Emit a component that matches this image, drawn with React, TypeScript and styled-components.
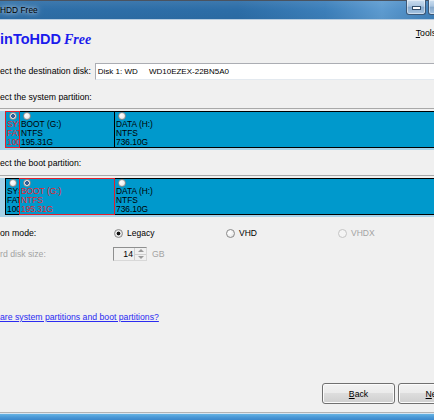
import styled, { createGlobalStyle } from "styled-components";

const GlobalStyle = createGlobalStyle`
  html, body {
    margin: 0;
    padding: 0;
  }
  body {
    width: 434px;
    height: 420px;
    overflow: hidden;
    background: #f0f0f0;
    font-family: "Liberation Sans", Arial, sans-serif;
    font-size: 8.7px;
    color: #000;
  }
`;

type Part = { name: string; fs: string; size: string; width?: number };

const parts: Part[] = [
  { name: "SYS", fs: "FAT", size: "100", width: 15 },
  { name: "BOOT (G:)", fs: "NTFS", size: "195.31G", width: 96 },
  { name: "DATA (H:)", fs: "NTFS", size: "736.10G" },
];

const App = () => {
  return (
    <Window>
      <GlobalStyle />
      <TitleBar>
        <Title>HDD Free</Title>
        <CaptionButtons>
          <CaptionButton>
            <MinGlyph />
          </CaptionButton>
          <CaptionButton />
        </CaptionButtons>
      </TitleBar>

      <HeaderRow>
        <Logo>
          inToHDD<Edition>Free</Edition>
        </Logo>
        <Menu>
          <u>T</u>ools
        </Menu>
      </HeaderRow>

      <DiskRow>
        <span>ect the destination disk:</span>
        <DiskField>{"Disk 1: WD     WD10EZEX-22BN5A0"}</DiskField>
      </DiskRow>

      <SectionLabel>ect the system partition:</SectionLabel>
      <PartitionStrip parts={parts} selected={0} />

      <SectionLabel $gap={7}>ect the boot partition:</SectionLabel>
      <PartitionStrip parts={parts} selected={1} $gap={6} />

      <OptionRow $gap={10}>
        <span>on mode:</span>
        <RadioOption>
          <Radio $size={9} $checked $dot="#111" />
          Legacy
        </RadioOption>
        <RadioOption>
          <Radio $size={9} />
          VHD
        </RadioOption>
        <RadioOption $disabled>
          <Radio $size={9} $disabled />
          VHDX
        </RadioOption>
      </OptionRow>

      <OptionRow $gap={8}>
        <Muted>rd disk size:</Muted>
        <SizeCell>
          <SpinBox>
            <SpinValue>14</SpinValue>
            <SpinArrows>
              <SpinHalf>
                <Arrow $up />
              </SpinHalf>
              <SpinHalf>
                <Arrow />
              </SpinHalf>
            </SpinArrows>
          </SpinBox>
          <Muted>GB</Muted>
        </SizeCell>
      </OptionRow>

      <HelpLink href="#">are system partitions and boot partitions?</HelpLink>

      <Spacer />

      <ButtonRow>
        <Button>
          <u>B</u>ack
        </Button>
        <Button>
          <u>N</u>ext
        </Button>
      </ButtonRow>
      <BottomFrame />
    </Window>
  );
};

const PartitionStrip = ({
  parts,
  selected,
  $gap,
}: {
  parts: Part[];
  selected: number;
  $gap?: number;
}) => (
  <Strip $gap={$gap}>
    <Track>
      {parts.map((p, i) => (
        <Segment key={p.name} $selected={i === selected} $width={p.width}>
          <Radio $size={8} $checked={i === selected} $dot="#2f5f9a" />
          <SegLine $selected={i === selected}>{p.name}</SegLine>
          <SegLine $selected={i === selected}>{p.fs}</SegLine>
          <SegLine $selected={i === selected}>{p.size}</SegLine>
        </Segment>
      ))}
    </Track>
  </Strip>
);

export default App;

const Window = styled.div`
  width: 434px;
  height: 420px;
  display: flex;
  flex-direction: column;
  overflow: hidden;
`;

const TitleBar = styled.div`
  height: 20px;
  box-sizing: border-box;
  border-top: 1px solid #4a5360;
  border-bottom: 1px solid #b9cde0;
  background: linear-gradient(
      180deg,
      rgba(255, 255, 255, 0.08) 0%,
      rgba(255, 255, 255, 0) 50%,
      rgba(0, 0, 0, 0.03) 100%
    ),
    linear-gradient(90deg, #2e6ea7 0%, #2c6da7 55%, #3c7fba 75%, #5d9bd0 88%, #3f80ba 100%);
  display: flex;
  align-items: center;
  justify-content: space-between;
`;

const Title = styled.span`
  font-size: 8.4px;
  color: #000;
  text-shadow: 0 0 4px rgba(255, 255, 255, 0.9), 0 0 8px rgba(255, 255, 255, 0.6);
`;

const CaptionButtons = styled.div`
  align-self: flex-start;
  margin-top: -1px;
  margin-right: -14px;
  display: flex;
  gap: 2px;
`;

const CaptionButton = styled.div`
  width: 20px;
  height: 15px;
  box-sizing: border-box;
  border: 1px solid #3d5876;
  border-top: none;
  border-radius: 0 0 3px 3px;
  background: linear-gradient(180deg, #cddff0 0%, #aac5e0 45%, #85a8cb 50%, #a6c4e2 100%);
  box-shadow: inset 0 0 0 1px rgba(255, 255, 255, 0.45);
  display: flex;
  align-items: flex-end;
  justify-content: center;
  padding-bottom: 4px;
`;

const MinGlyph = styled.span`
  width: 7px;
  height: 2px;
  background: #fff;
  border: 1px solid #35506c;
`;

const HeaderRow = styled.div`
  height: 32px;
  display: flex;
  justify-content: space-between;
`;

const Logo = styled.div`
  padding-top: 11px;
  line-height: 17px;
  font-size: 14.5px;
  font-weight: bold;
  color: #1b1bec;
  white-space: nowrap;
`;

const Edition = styled.span`
  font-family: "Liberation Serif", "Times New Roman", serif;
  font-style: italic;
  font-size: 14px;
  margin-left: 3px;
`;

const Menu = styled.div`
  margin-top: 8px;
  margin-right: -2px;
  line-height: 10px;
`;

const DiskRow = styled.div`
  margin-top: 10px;
  height: 18px;
  display: flex;
  align-items: center;
  gap: 4px;
  white-space: nowrap;
`;

const DiskField = styled.div`
  flex: 1;
  height: 17px;
  box-sizing: border-box;
  border: 1px solid #abadb3;
  border-right: none;
  border-bottom-color: #e3e9ef;
  background: #fff;
  font-size: 8px;
  line-height: 15px;
  padding-left: 2px;
  white-space: pre;
`;

const SectionLabel = styled.div<{ $gap?: number }>`
  margin-top: ${(p) => p.$gap ?? 11}px;
  line-height: 12px;
  white-space: nowrap;
`;

const Strip = styled.div<{ $gap?: number }>`
  margin-top: ${(p) => p.$gap ?? 5}px;
  border-top: 1px solid #a9a9a9;
  padding-top: 2px;
`;

const Track = styled.div`
  display: flex;
  background: #a8d2e7;
  padding: 0 0 2px 5px;
  margin-right: -10px;
`;

const Segment = styled.div<{ $selected?: boolean; $width?: number }>`
  position: relative;
  z-index: ${(p) => (p.$selected ? 1 : 0)};
  ${(p) => (p.$width ? `width: ${p.$width}px; flex-shrink: 0;` : "flex: 1;")}
  height: 37px;
  box-sizing: border-box;
  border: 1px solid ${(p) => (p.$selected ? "#e0202c" : "#000")};
  background: #0099cc;
  overflow: hidden;
  padding-left: 1px;

  & + & {
    margin-left: -1px;
  }

  & > span {
    margin-left: 2px;
  }
`;

const SegLine = styled.div<{ $selected?: boolean }>`
  font-size: 8.4px;
  line-height: 9px;
  white-space: nowrap;
  overflow: hidden;
  color: ${(p) => (p.$selected ? "#e8242e" : "#000")};
`;

const Radio = styled.span<{
  $size: number;
  $checked?: boolean;
  $dot?: string;
  $disabled?: boolean;
}>`
  display: block;
  flex-shrink: 0;
  width: ${(p) => p.$size}px;
  height: ${(p) => p.$size}px;
  box-sizing: border-box;
  border-radius: 50%;
  border: 1px solid ${(p) => (p.$disabled ? "#c4c4c4" : "#8a8a8a")};
  background: ${(p) =>
    p.$checked
      ? `radial-gradient(circle, ${p.$dot} 0 1.6px, #e9e9e9 2.2px, #d4d4d4 100%)`
      : p.$disabled
      ? "#f4f4f4"
      : "radial-gradient(circle at 35% 35%, #ffffff 0%, #f1f1f1 50%, #d6d6d6 100%)"};
`;

const OptionRow = styled.div<{ $gap: number }>`
  margin-top: ${(p) => p.$gap}px;
  display: grid;
  grid-template-columns: 114px 112px 112px auto;
  align-items: center;
  min-height: 12px;
  white-space: nowrap;
`;

const RadioOption = styled.label<{ $disabled?: boolean }>`
  display: flex;
  align-items: center;
  gap: 4px;
  font-size: 8.5px;
  color: ${(p) => (p.$disabled ? "#a3a3a3" : "#000")};
`;

const Muted = styled.span`
  color: #a3a3a3;
`;

const SizeCell = styled.div`
  display: flex;
  align-items: center;
  gap: 5px;
  margin-left: -1px;
`;

const SpinBox = styled.div`
  width: 34px;
  height: 14px;
  box-sizing: border-box;
  border: 1px solid;
  border-color: #8e8f8f #d8d8d8 #d8d8d8 #8e8f8f;
  display: flex;
  align-items: stretch;
`;

const SpinValue = styled.span`
  flex: 1;
  text-align: right;
  line-height: 12px;
  padding-right: 1px;
`;

const SpinArrows = styled.div`
  width: 11px;
  display: flex;
  flex-direction: column;
  border-left: 1px solid #cfcfcf;
`;

const SpinHalf = styled.div`
  flex: 1;
  display: flex;
  align-items: center;
  justify-content: center;
  & + & {
    border-top: 1px solid #cfcfcf;
  }
`;

const Arrow = styled.span<{ $up?: boolean }>`
  width: 0;
  height: 0;
  border-left: 3px solid transparent;
  border-right: 3px solid transparent;
  ${(p) =>
    p.$up ? "border-bottom: 3px solid #9a9a9a;" : "border-top: 3px solid #9a9a9a;"}
`;

const HelpLink = styled.a`
  margin-top: 50px;
  line-height: 12px;
  color: #2b2bf0;
  text-decoration: underline;
  white-space: nowrap;
`;

const Spacer = styled.div`
  flex: 1;
`;

const ButtonRow = styled.div`
  display: flex;
  justify-content: flex-end;
  gap: 3px;
  margin-right: -37px;
  padding-bottom: 8px;
`;

const Button = styled.button`
  width: 73px;
  height: 21px;
  box-sizing: border-box;
  border: 1px solid #707070;
  border-radius: 3px;
  background: linear-gradient(180deg, #f2f2f2 0%, #ebebeb 45%, #dddddd 50%, #cfcfcf 100%);
  box-shadow: inset 0 0 0 1px #fbfbfb;
  font-family: "Liberation Sans", Arial, sans-serif;
  font-size: 8.7px;
  color: #000;
  padding: 0;
`;

const BottomFrame = styled.div`
  height: 8px;
  flex-shrink: 0;
  box-sizing: border-box;
  border-top: 1px solid #b3b3b3;
  background: linear-gradient(180deg, #d6e5f2 0 1px, #66b4e4 1px, #4a98d6 60%, #3c88cb 100%);
`;
